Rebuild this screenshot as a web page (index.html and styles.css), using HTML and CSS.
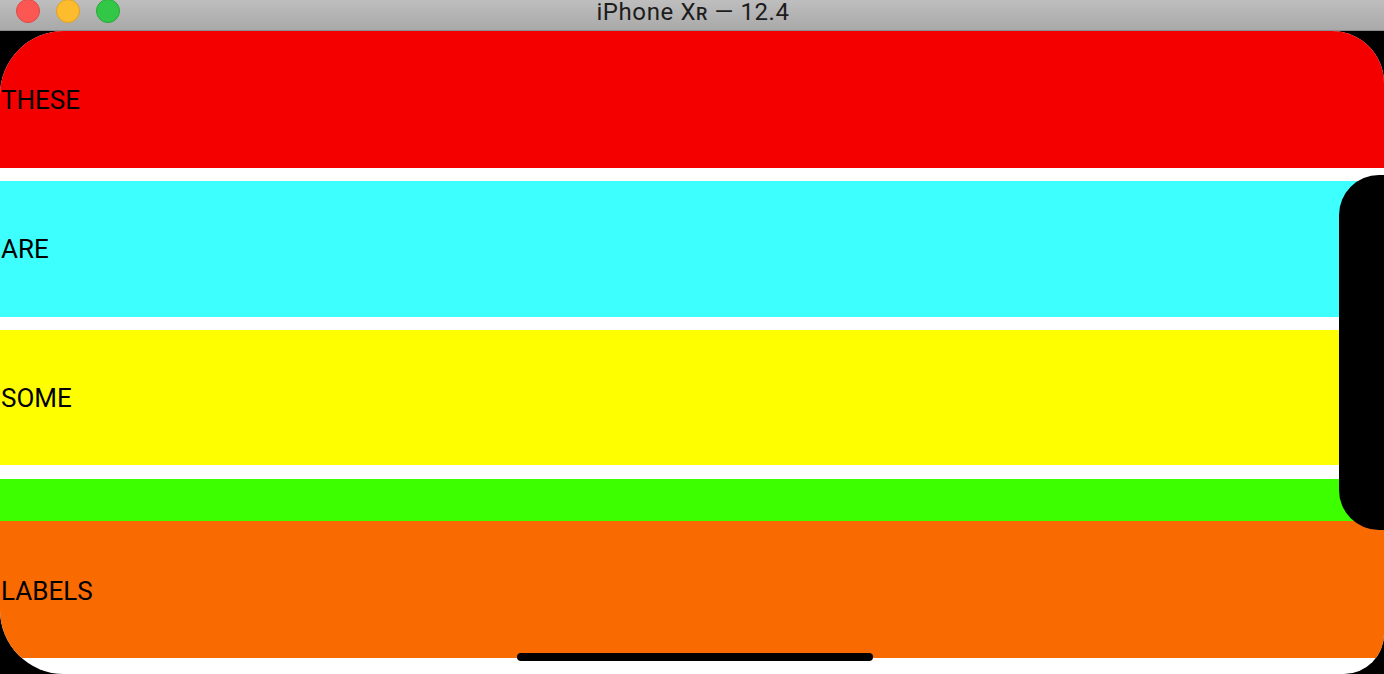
FILE: index.html
```html
<!DOCTYPE html>
<html lang="en">
<head>
    <meta charset="UTF-8">
    <meta name="viewport" content="width=device-width, initial-scale=1.0">
    <title>iPhone XR — 12.4</title>
    <link rel="stylesheet" href="styles.css">
</head>
<body>
    <div class="window">
        <!-- Barra de título del simulador -->
        <div class="titlebar">
            <div class="lights">
                <span class="light close"></span>
                <span class="light minimize"></span>
                <span class="light zoom"></span>
            </div>
            <div class="title">iPhone X<span class="small-caps">R</span> — 12.4</div>
        </div>
        <!-- Pantalla del dispositivo -->
        <div class="bezel">
            <div class="display">
                <div class="band red">THESE</div>
                <div class="band cyan">ARE</div>
                <div class="band yellow">SOME</div>
                <div class="band green"></div>
                <div class="band orange">LABELS</div>
            </div>
            <div class="notch"></div>
            <div class="home-bar"></div>
        </div>
    </div>
</body>
</html>
```

FILE: styles.css
```css
body {
    margin: 0;
    padding: 0;
    overflow: hidden;
    background-color: #000;
    font-family: Roboto, "Liberation Sans", sans-serif;
}

.window {
    width: 1384px;
    height: 674px;
    display: flex;
    flex-direction: column;
}

.titlebar {
    height: 30px;
    flex-shrink: 0;
    position: relative;
    display: flex;
    align-items: center;
    justify-content: center;
    background: linear-gradient(#bebebe, #a9a9a9);
    border-bottom: 1px solid #8d8d8d;
}

.lights {
    position: absolute;
    left: 16px;
    top: -1px;
    display: flex;
    gap: 16px;
}

.light {
    width: 22px;
    height: 22px;
    border-radius: 50%;
    border: 1px solid;
}

.close {
    background-color: #fc5753;
    border-color: #de4a45;
}

.minimize {
    background-color: #fdbc2e;
    border-color: #de9f23;
}

.zoom {
    background-color: #33c748;
    border-color: #27a935;
}

.title {
    font-size: 24px;
    line-height: 26px;
    letter-spacing: 0.6px;
    color: #1c1c1c;
    margin-top: -5px;
    margin-left: 2px;
}

.small-caps {
    font-size: 18px;
    font-weight: 500;
}

.bezel {
    position: relative;
    flex: 1;
    background-color: #000;
    overflow: hidden;
}

.display {
    height: 643px;
    background-color: #fff;
    border-radius: 64px 52px 40px 64px;
    overflow: hidden;
    display: flex;
    flex-direction: column;
}

.band {
    display: flex;
    align-items: center;
    padding-left: 1px;
    font-size: 26px;
    color: #000;
    flex-shrink: 0;
}

.red {
    height: 137px;
    background-color: #f50000;
}

.cyan {
    height: 136px;
    margin-top: 13px;
    background-color: #3dfffe;
}

.yellow {
    height: 135px;
    margin-top: 13px;
    background-color: #fffe00;
}

.green {
    height: 42px;
    margin-top: 14px;
    background-color: #3dff00;
}

.orange {
    height: 137px;
    padding-top: 2px;
    box-sizing: border-box;
    background-color: #f96a00;
}

.notch {
    position: absolute;
    right: 0;
    top: 144px;
    width: 45px;
    height: 355px;
    background-color: #000;
    border-radius: 40px 0 0 40px;
}

.home-bar {
    position: absolute;
    left: 517px;
    top: 622px;
    width: 356px;
    height: 8px;
    border-radius: 4px;
    background-color: #000;
}
```
